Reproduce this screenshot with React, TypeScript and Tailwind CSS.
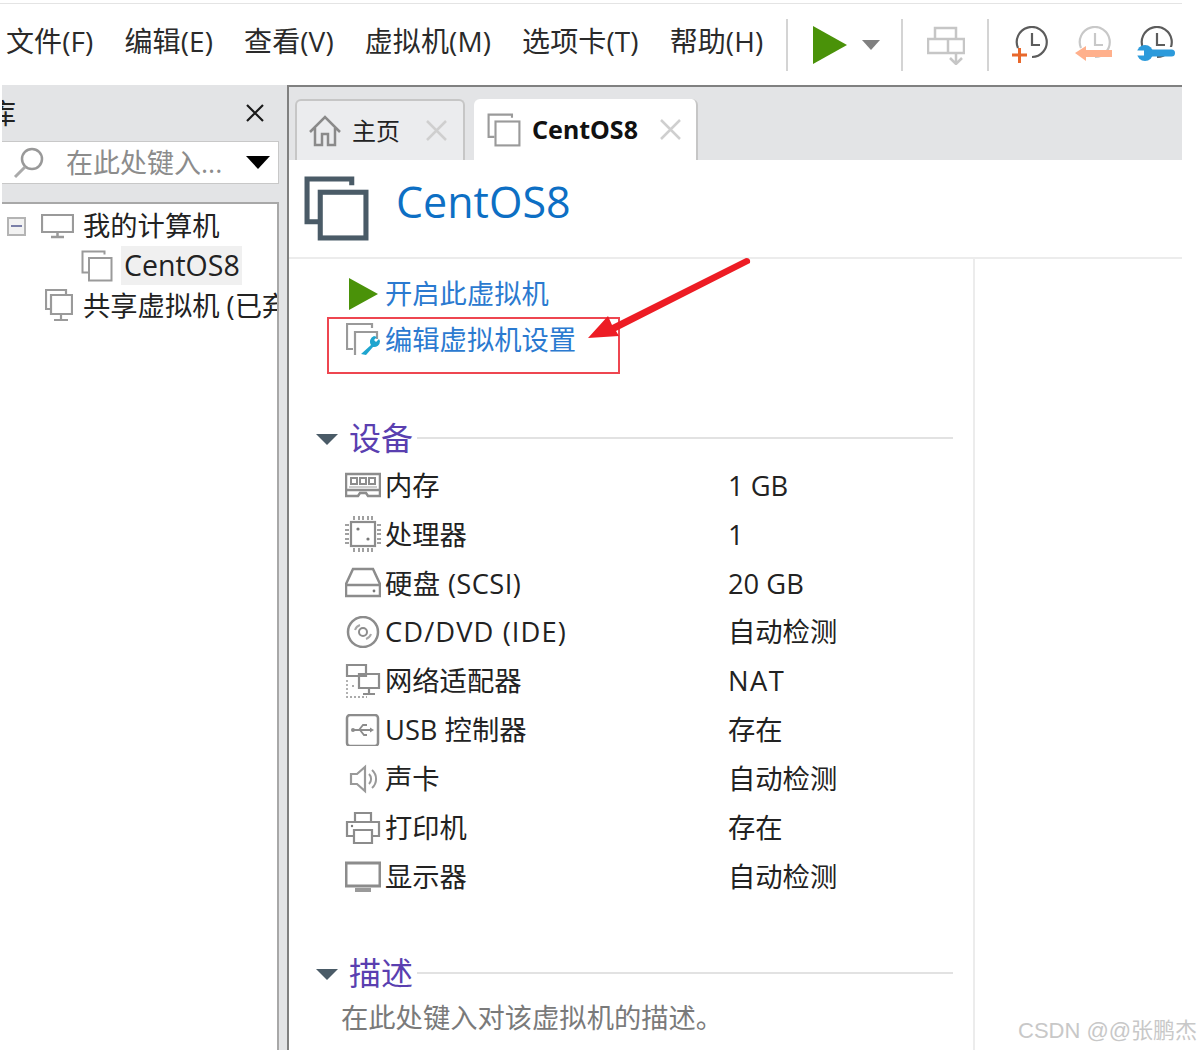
import React from "react";

const FONT = { fontFamily: '"Open Sans", "Noto Sans CJK SC", sans-serif' };

const IconBox: React.FC<{ children: React.ReactNode; w?: number; h?: number; className?: string }> = ({ children, w = 36, h = 32, className }) => (
  <svg width={w} height={h} viewBox={`0 0 ${w} ${h}`} fill="none" className={className}>
    {children}
  </svg>
);

const VmIcon: React.FC<{ size: number; color: string; sw: number }> = ({ size, color, sw }) => (
  <svg width={size} height={size} viewBox="0 0 64 64" fill="none" stroke={color} strokeWidth={sw} strokeLinecap="butt" className="shrink-0">
    <path d="M14 45H3V3H47V9" />
    <rect x="16" y="16" width="45" height="45" />
  </svg>
);

const Clock = ({ color = "#5c5c5c" }: { color?: string }) => (
  <>
    <path d="M6 22a15 15 0 1 1 14 9" stroke={color} strokeWidth="2.200" />
    <path d="M20 7v12h8" stroke={color} strokeWidth="2.200" />
  </>
);

const MemoryIcon = () => (
  <IconBox>
    <path d="M1 5h34v16H1zM1 21v6h12l2-3h6l2 3h12v-6" stroke="#8c8c8c" strokeWidth="2.500" />
    <path d="M6 9h6v6H6zM15 9h6v6h-6zM24 9h6v6h-6z" stroke="#8c8c8c" strokeWidth="2" />
    <path d="M4 18h28" stroke="#bbb" strokeWidth="1.5" />
  </IconBox>
);

const CpuIcon = () => (
  <IconBox h={36}>
    <rect x="6" y="6" width="24" height="24" stroke="#8c8c8c" strokeWidth="2.200" />
    <path d="M9 0v4M14 0v4M18 0v4M23 0v4M27 0v4M9 32v4M14 32v4M18 32v4M23 32v4M27 32v4M0 9h4M0 14h4M0 18h4M0 23h4M0 27h4M32 9h4M32 14h4M32 18h4M32 23h4M32 27h4" stroke="#a0a0a0" strokeWidth="2" />
    <circle cx="13" cy="13" r="1.600" fill="#777" />
    <circle cx="23" cy="23" r="1.600" fill="#777" />
  </IconBox>
);

const DiskIcon = () => (
  <IconBox>
    <path d="M8 2h20l7 15v12H1V17zM1 18h34" stroke="#8c8c8c" strokeWidth="2.500" />
    <circle cx="29" cy="24" r="1.400" fill="#777" />
  </IconBox>
);

const CdIcon = () => (
  <IconBox>
    <circle cx="18" cy="16" r="15" stroke="#8c8c8c" strokeWidth="2.500" />
    <circle cx="18" cy="16" r="4" stroke="#8c8c8c" strokeWidth="2" />
    <path d="M10 14a8 8 0 0 1 5-5M26 18a8 8 0 0 1-5 5" stroke="#a8a8a8" strokeWidth="2" />
  </IconBox>
);

const NetIcon = () => (
  <IconBox h={34}>
    <path d="M2 1h19v11H2zM14 10h20v14H14zM24 24v5M18 30h12" stroke="#8c8c8c" strokeWidth="2.200" />
    <path d="M2 16v17h20M7 22h4" stroke="#aaa" strokeWidth="1.800" strokeDasharray="2 2" />
  </IconBox>
);

const UsbIcon = () => (
  <IconBox>
    <rect x="2" y="1" width="31" height="31" rx="3" stroke="#8c8c8c" strokeWidth="2.500" />
    <path d="M8 16h19M14 16l4-5h4M15 16l4 5h3" stroke="#8c8c8c" strokeWidth="1.800" />
    <circle cx="8" cy="16" r="2" fill="#8c8c8c" />
    <path d="M29 16l-4-2.500v5z" fill="#8c8c8c" />
  </IconBox>
);

const SoundIcon = () => (
  <IconBox>
    <path d="M6 11h6l8-7v24l-8-7H6z" stroke="#999" strokeWidth="2.200" />
    <path d="M24 11a7 7 0 0 1 0 10M27 7a12 12 0 0 1 0 18" stroke="#999" strokeWidth="2" />
  </IconBox>
);

const PrinterIcon = () => (
  <IconBox>
    <path d="M10 10V1h16v9M9 24H2V10h32v14h-7" stroke="#8c8c8c" strokeWidth="2.200" />
    <path d="M9 18h18v13H9z" stroke="#8c8c8c" strokeWidth="2.200" />
    <circle cx="7" cy="14" r="1.200" fill="#777" />
  </IconBox>
);

const DisplayIcon = () => (
  <IconBox>
    <path d="M1 2h34v23H1z" stroke="#8c8c8c" strokeWidth="3" />
    <path d="M10 29h16" stroke="#9a9a9a" strokeWidth="4" />
  </IconBox>
);

const devices = [
  { icon: <MemoryIcon />, label: "内存", value: "1 GB" },
  { icon: <CpuIcon />, label: "处理器", value: "1" },
  { icon: <DiskIcon />, label: "硬盘 (SCSI)", value: "20 GB", labelClass: "tracking-[0.4px]" },
  { icon: <CdIcon />, label: "CD/DVD (IDE)", value: "自动检测", labelClass: "tracking-[1.1px]" },
  { icon: <NetIcon />, label: "网络适配器", value: "NAT", valueClass: "tracking-[1.5px]" },
  { icon: <UsbIcon />, label: "USB 控制器", value: "存在" },
  { icon: <SoundIcon />, label: "声卡", value: "自动检测" },
  { icon: <PrinterIcon />, label: "打印机", value: "存在" },
  { icon: <DisplayIcon />, label: "显示器", value: "自动检测" },
];

const menus = ["文件(F)", "编辑(E)", "查看(V)", "虚拟机(M)", "选项卡(T)", "帮助(H)"];

const Separator = () => <div className="h-[52px] w-[2px] bg-[#d4d4d4]" />;

const SectionHeader: React.FC<{ title: string; className?: string }> = ({ title, className }) => (
  <div className={`flex h-[46px] items-center pl-[27px] ${className ?? ""}`}>
    <div className="mt-[2px] h-0 w-0 border-x-[11px] border-t-[11px] border-x-transparent border-t-[#4a5b67]" />
    <span className="ml-[11px] text-[32px] leading-none text-[#5a3fb0]">{title}</span>
    <div className="ml-[4px] mr-[20px] h-[2px] flex-1 bg-[#e2e2e2]" />
  </div>
);

export default function App() {
  return (
    <div className="relative h-[1050px] w-[1200px] overflow-hidden bg-white" style={FONT}>
      <div className="h-[4px] w-[1182px] border-b border-[#e4e4e4]" />

      {/* menu + toolbar */}
      <div className="flex h-[81px] w-[1182px] items-center pl-[6px] text-[28px] text-[#2a2a2a]">
        <div className="-mt-[8px] flex gap-[31px] whitespace-nowrap">
          {menus.map((m) => (
            <span key={m} className="leading-none tracking-[0.1px]">{m}</span>
          ))}
        </div>
        <div className="ml-[23px] flex items-center">
          <Separator />
          <svg width="34" height="38" viewBox="0 0 34 38" className="ml-[25px]">
            <path d="M0 0L34 19L0 38z" fill="#4a9209" />
          </svg>
          <svg width="18" height="10" viewBox="0 0 18 10" className="ml-[15px]">
            <path d="M0 0h18L9 10z" fill="#808080" />
          </svg>
          <div className="ml-[21px]"><Separator /></div>
          <svg width="38" height="40" viewBox="0 0 38 40" fill="none" className="ml-[24px]">
            <path d="M8 3h21v11H8zM1 14h36v14H1zM21 14v14M29 28v11M23 33l6 6 6-6" stroke="#c6c6c6" strokeWidth="2.500" />
          </svg>
          <div className="ml-[22px]"><Separator /></div>
          <svg width="36" height="38" viewBox="0 0 36 38" fill="none" className="ml-[23px]">
            <Clock />
            <path d="M0 29h15M7.500 22v15" stroke="#e8682c" strokeWidth="3" />
          </svg>
          <svg width="38" height="38" viewBox="0 0 38 38" fill="none" className="ml-[27px]">
            <Clock color="#c8c8c8" />
            <path d="M0 27l11-7v4h26v7H11v4z" fill="#ffb08c" />
          </svg>
          <svg width="38" height="38" viewBox="0 0 38 38" fill="none" className="ml-[24px]">
            <Clock />
            <rect width="38" height="8" y="21" fill="white" />
            <circle cx="8" cy="27" r="8" fill="#2c9adb" />
            <rect x="10" y="23.500" width="28" height="7" rx="3.500" fill="#2c9adb" />
            <rect x="0" y="24.500" width="7" height="5" fill="white" />
          </svg>
        </div>
      </div>

      <div className="flex h-[965px] pl-[2px]">
        {/* library sidebar */}
        <div className="flex w-[285px] flex-col bg-[#e3e4e6] pr-[8px]">
          <div className="flex h-[56px] items-center justify-between overflow-hidden">
            <span className="-ml-[14px] text-[28px] leading-none text-[#222]">库</span>
            <svg width="18" height="18" viewBox="0 0 18 18" className="mr-[15px]" stroke="#1a1a1a" strokeWidth="2.200">
              <path d="M1 1l16 16M17 1L1 17" />
            </svg>
          </div>
          <div className="flex h-[43px] items-center border-y border-r border-[#c8c8c8] bg-white">
            <svg width="32" height="32" viewBox="0 0 32 32" fill="none" className="ml-[11px]">
              <circle cx="19" cy="12" r="10" stroke="#999" strokeWidth="2.500" />
              <path d="M12 20L2 30" stroke="#aaa" strokeWidth="3" />
            </svg>
            <span className="ml-[21px] whitespace-nowrap text-[27px] leading-none text-[#8c8c8c]">在此处键入...</span>
            <div className="ml-auto mr-[8px] h-0 w-0 border-x-[12px] border-t-[13px] border-x-transparent border-t-black" />
          </div>
          <div className="mt-[18px] flex-1 overflow-hidden border-t-2 border-r-2 border-[#a8a8a8] bg-white pt-[2px] text-[27.300px] text-[#222]">
            <div className="flex h-[40px] items-center">
              <div className="ml-[5px] flex h-[19px] w-[19px] shrink-0 items-center justify-center border-2 border-[#b4b4b4] bg-[#f2f2f2]">
                <div className="h-[2px] w-[11px] bg-[#7a7fa8]" />
              </div>
              <svg width="33" height="26" viewBox="0 0 33 26" fill="none" className="ml-[15px] shrink-0">
                <path d="M1 2h31v17H1z" stroke="#9a9a9a" strokeWidth="2.200" />
                <path d="M10 24h13M16.500 19v5" stroke="#9a9a9a" strokeWidth="2.500" />
              </svg>
              <span className="ml-[9px] whitespace-nowrap leading-none">我的计算机</span>
            </div>
            <div className="flex h-[39px] items-center pl-[79px]">
              <VmIcon size={32} color="#9a9a9a" sw={4} />
              <span className="ml-[8px] flex h-[39px] w-[121px] items-center bg-[#f0f0f0] pl-[3px] text-[28.500px] leading-none">CentOS8</span>
            </div>
            <div className="flex h-[41px] items-center pl-[43px]">
              <svg width="28" height="33" viewBox="0 0 28 33" fill="none" className="shrink-0">
                <path d="M5 20H1V1h20v4" stroke="#9a9a9a" strokeWidth="2.200" />
                <path d="M6 6h21v19H6zM16 25v5M9 31h14" stroke="#9a9a9a" strokeWidth="2.200" />
              </svg>
              <span className="ml-[10px] whitespace-nowrap leading-none">共享虚拟机 (已弃用)</span>
            </div>
          </div>
        </div>

        {/* main panel */}
        <div className="flex w-[895px] flex-col border-l-2 border-t-2 border-[#808080]">
          <div className="flex h-[73px] items-end gap-[9px] bg-[#e3e4e6] pl-[6px]">
            <div className="flex h-[61px] w-[170px] items-center rounded-t-[6px] border-x-2 border-t-2 border-[#c6c6c6] bg-[#ebecee] pl-[12px]">
              <svg width="32" height="32" viewBox="0 0 32 32" fill="none" stroke="#8a8a8a" strokeWidth="2.500">
                <path d="M1 17L16 2l15 15M6 13v17h7V19h6v11h7V13" />
              </svg>
              <span className="ml-[11px] text-[24px] leading-none text-[#222]">主页</span>
              <svg width="21" height="21" viewBox="0 0 21 21" stroke="#cfcfcf" strokeWidth="2.500" className="ml-[26px]">
                <path d="M1 1l19 19M20 1L1 20" />
              </svg>
            </div>
            <div className="flex h-[61px] w-[224px] items-center rounded-t-[6px] border-r-2 border-[#c6c6c6] bg-white pl-[13px]">
              <VmIcon size={34} color="#9a9a9a" sw={4} />
              <span className="ml-[11px] text-[25px] font-bold leading-none text-[#111]" style={{ fontFamily: '"Noto Sans", sans-serif' }}>CentOS8</span>
              <svg width="21" height="21" viewBox="0 0 21 21" stroke="#cfcfcf" strokeWidth="2.500" className="ml-[22px]">
                <path d="M1 1l19 19M20 1L1 20" />
              </svg>
            </div>
          </div>

          <div className="flex h-[99px] items-center border-b-2 border-[#ececec] pl-[15px]">
            <VmIcon size={65} color="#4a5b67" sw={5} />
            <span className="-mt-[14px] ml-[27px] text-[43px] leading-none text-[#0d6fc4]">CentOS8</span>
          </div>

          <div className="flex flex-1">
            <div className="w-[686px] border-r-2 border-[#ececec]">
              <div className="pt-[12px] text-[27.300px] leading-none text-[#2b7ad0]">
                <div className="flex h-[46px] items-center pl-[60px]">
                  <svg width="29" height="32" viewBox="0 0 29 32"><path d="M0 0L29 16L0 32z" fill="#4a9209" /></svg>
                  <span className="ml-[7px] whitespace-nowrap">开启此虚拟机</span>
                </div>
                <div className="flex h-[46px] items-center pl-[57px]">
                  <svg width="34" height="34" viewBox="0 0 34 34" fill="none">
                    <path d="M7 26H1V1h25v4" stroke="#9a9a9a" strokeWidth="2.200" />
                    <path d="M9 32V9h22v7" stroke="#9a9a9a" strokeWidth="2.200" />
                    <path d="M15 31l10-9a6 6 0 0 1 3-9l3 1-3 3 2 2 3-3 1 2a6 6 0 0 1-7 6l-7 8z" fill="#1ea5cf" />
                  </svg>
                  <span className="ml-[5px] whitespace-nowrap">编辑虚拟机设置</span>
                </div>
              </div>

              <SectionHeader title="设备" className="mt-[52px]" />
              <div className="text-[27.300px] leading-none text-[#222]">
                {devices.map((d) => (
                  <div key={d.label} className="flex h-[48.900px] items-center pl-[56px]">
                    <div className="flex w-[36px] items-center justify-center">{d.icon}</div>
                    <span className={`ml-[4px] w-[343px] whitespace-nowrap ${d.labelClass ?? ""}`}>{d.label}</span>
                    <span className={`whitespace-nowrap ${d.valueClass ?? ""}`}>{d.value}</span>
                  </div>
                ))}
              </div>

              <SectionHeader title="描述" className="mt-[49px]" />
              <div className="mt-[8px] pl-[52px] text-[27.300px] leading-none whitespace-nowrap text-[#7a7a7a]">
                在此处键入对该虚拟机的描述。
              </div>
            </div>
          </div>
        </div>
      </div>

      {/* annotation drawn over the screenshot */}
      <div className="absolute left-[327px] top-[317px] h-[57px] w-[293px] border-2 border-[#ee4650]" />
      <svg width="1200" height="1050" viewBox="0 0 1200 1050" className="pointer-events-none absolute left-0 top-0">
        <path d="M588 338L608 316L612 325L746 258Q751 258 750 263L616 331L619 336z" fill="#ed1c24" />
      </svg>
      <div className="absolute left-[1018px] top-[1020px] whitespace-nowrap text-[22px] leading-none text-[#c8c8c8]" style={{ fontFamily: '"Liberation Sans", "Noto Sans CJK SC", sans-serif' }}>
        CSDN @@张鹏杰
      </div>
    </div>
  );
}
